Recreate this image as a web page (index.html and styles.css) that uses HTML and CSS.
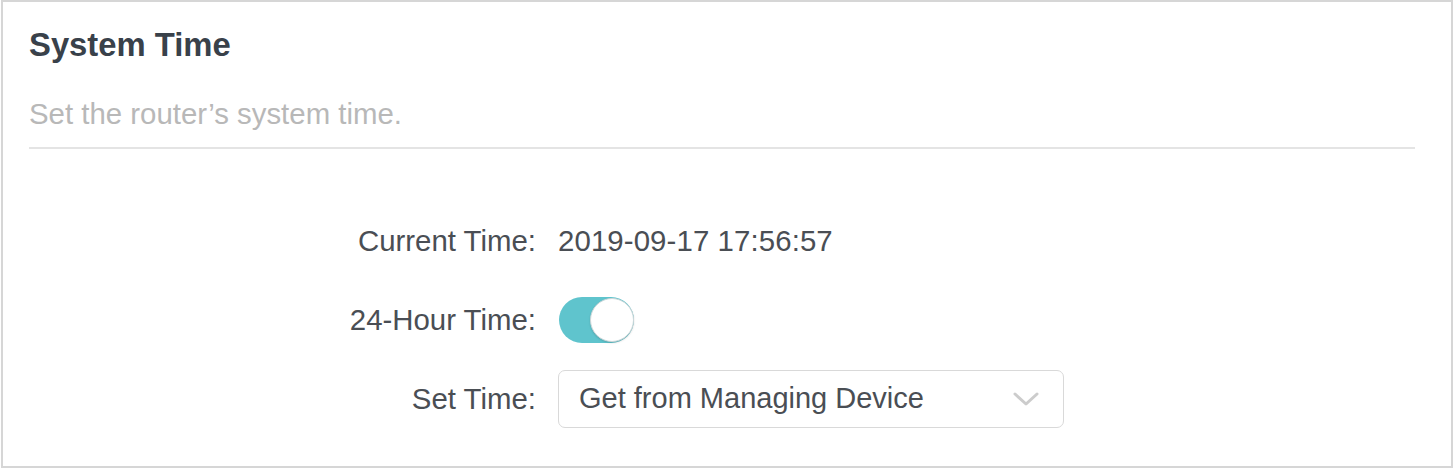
FILE: index.html
```html
<!DOCTYPE html>
<html lang="en">
<head>
<meta charset="utf-8">
<title>System Time</title>
<link rel="stylesheet" href="styles.css">
</head>
<body>
<section class="panel">
  <h1 class="title">System Time</h1>
  <p class="subtitle">Set the router’s system time.</p>
  <hr class="divider">
  <div class="form">
    <div class="row">
      <span class="label">Current Time:</span>
      <span class="value">2019-09-17 17:56:57</span>
    </div>
    <div class="row">
      <span class="label">24-Hour Time:</span>
      <span class="toggle"><span class="knob"></span></span>
    </div>
    <div class="row">
      <span class="label">Set Time:</span>
      <div class="select">
        <span class="select-text">Get from Managing Device</span>
        <svg class="chevron" width="26" height="14" viewBox="0 0 26 14"><path d="M2 2 L13 12 L24 2" fill="none" stroke="#cccccc" stroke-width="3" stroke-linecap="round" stroke-linejoin="round"/></svg>
      </div>
    </div>
  </div>
</section>
</body>
</html>
```

FILE: styles.css
```css
html, body {
  margin: 0;
  padding: 0;
  background: #ffffff;
}
body {
  font-family: "Liberation Sans", Arial, sans-serif;
}
.panel {
  box-sizing: border-box;
  width: 1452px;
  height: 468px;
  margin-left: 1px;
  border: 2px solid #d6d6d6;
  padding: 24px 36px 0 26px;
}
.title {
  margin: 0;
  font-size: 32.8px;
  line-height: 1.15;
  font-weight: bold;
  color: #39414a;
}
.subtitle {
  margin: 33px 0 0 0;
  font-size: 29.4px;
  line-height: 1.15;
  color: #b8b8b8;
}
.divider {
  margin: 16px 0 0 0;
  border: 0;
  height: 2px;
  background: #e4e4e4;
}
.form {
  margin-top: 63px;
  display: flex;
  flex-direction: column;
  gap: 21px;
}
.row {
  display: grid;
  grid-template-columns: 507px 1fr;
  column-gap: 22px;
  align-items: center;
  height: 58px;
  font-size: 29.4px;
  line-height: 1.15;
  color: #4a4e54;
}
.label {
  text-align: right;
}
.value {
  color: #4a4e54;
  letter-spacing: 0.1px;
}
.toggle {
  position: relative;
  display: block;
  width: 75px;
  height: 46px;
  border-radius: 23px;
  background: #5fc4cd;
  margin-left: 1px;
}
.knob {
  position: absolute;
  top: 1px;
  right: 0;
  box-sizing: border-box;
  width: 44px;
  height: 44px;
  border-radius: 50%;
  background: #ffffff;
  border: 1px solid #cfd8da;
  box-shadow: 0 1px 2px rgba(0,0,0,0.15);
}
.select {
  box-sizing: border-box;
  width: 506px;
  height: 58px;
  border: 1px solid #d9d9d9;
  border-radius: 7px;
  display: flex;
  align-items: center;
  justify-content: space-between;
  padding: 0 24px 0 20px;
}
.select-text {
  color: #4a4e54;
  font-size: 29px;
}
.chevron {
  display: block;
}
```
